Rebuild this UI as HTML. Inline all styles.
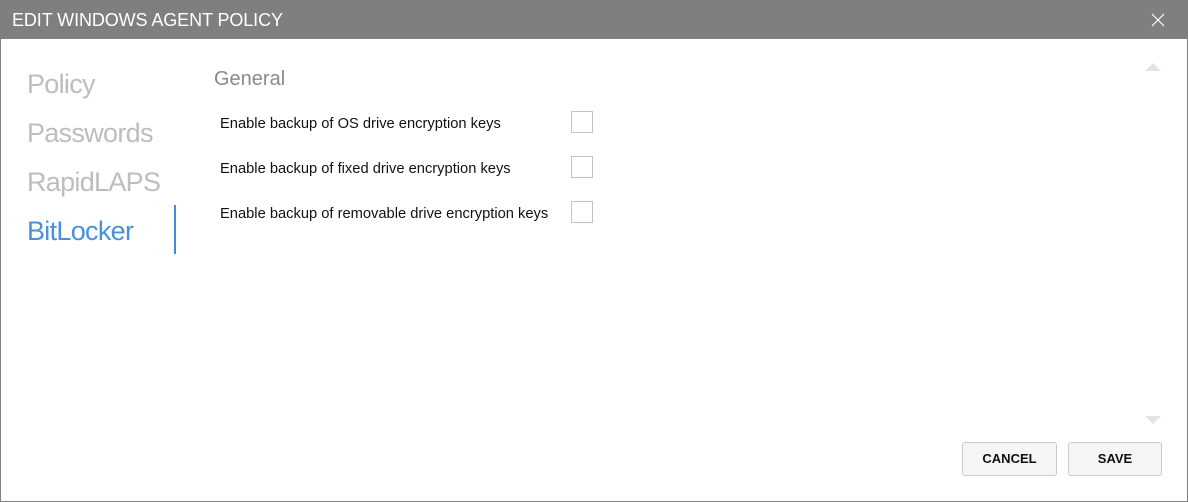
<!DOCTYPE html>
<html><head><style>
*{margin:0;padding:0;box-sizing:border-box}
body{width:1188px;height:502px;background:#fff;font-family:"Segoe UI","Liberation Sans",sans-serif;position:relative;overflow:hidden}
.win{position:absolute;left:0;top:0;width:1188px;height:502px;border:1px solid #7f7f7f}
.title{position:absolute;left:0;top:0;width:1188px;height:39px;background:#7f7f7f;color:#fff;font-size:18px;line-height:40px;padding-left:12px;letter-spacing:-0.1px}
.nav{position:absolute;left:27px;font-size:27px;color:#bdbdbd;letter-spacing:-0.7px}
.bar{position:absolute;left:174px;top:205px;width:2px;height:49px;background:#3b8de0}
.h{position:absolute;left:214px;top:68px;font-size:20px;color:#8a8a8a}
.lbl{position:absolute;left:220px;font-size:14.7px;color:#111}
.cb{position:absolute;left:571px;width:22px;height:22px;border:1px solid #c3c3c3;background:#fff}
.btn{position:absolute;top:442px;height:34px;border:1px solid #ccc;border-radius:3px;background:#f5f5f5;font-weight:bold;font-size:13px;text-align:center;line-height:32px;color:#111}
.tri{position:absolute;left:1145px;width:0;height:0;border-left:8px solid transparent;border-right:8px solid transparent}
</style></head><body>
<div class="win"></div>
<div class="title">EDIT WINDOWS AGENT POLICY</div>
<svg style="position:absolute;left:1151px;top:13px" width="14" height="14"><path d="M1 1L13 13M13 1L1 13" stroke="#fff" stroke-width="1.2"/></svg>
<div class="nav" style="top:69px">Policy</div>
<div class="nav" style="top:118px">Passwords</div>
<div class="nav" style="top:167px">RapidLAPS</div>
<div class="nav" style="top:216px;color:#4a90d9">BitLocker</div>
<div class="bar"></div>
<div class="h">General</div>
<div class="lbl" style="top:116px">Enable backup of OS drive encryption keys</div>
<div class="lbl" style="top:161px">Enable backup of fixed drive encryption keys</div>
<div class="lbl" style="top:206px">Enable backup of removable drive encryption keys</div>
<div class="cb" style="top:111px"></div>
<div class="cb" style="top:156px"></div>
<div class="cb" style="top:201px"></div>
<div class="tri" style="top:63px;border-bottom:8px solid #e3e3e3"></div>
<div class="tri" style="top:416px;border-top:8px solid #e3e3e3"></div>
<div class="btn" style="left:962px;width:95px">CANCEL</div>
<div class="btn" style="left:1068px;width:94px">SAVE</div>
</body></html>
